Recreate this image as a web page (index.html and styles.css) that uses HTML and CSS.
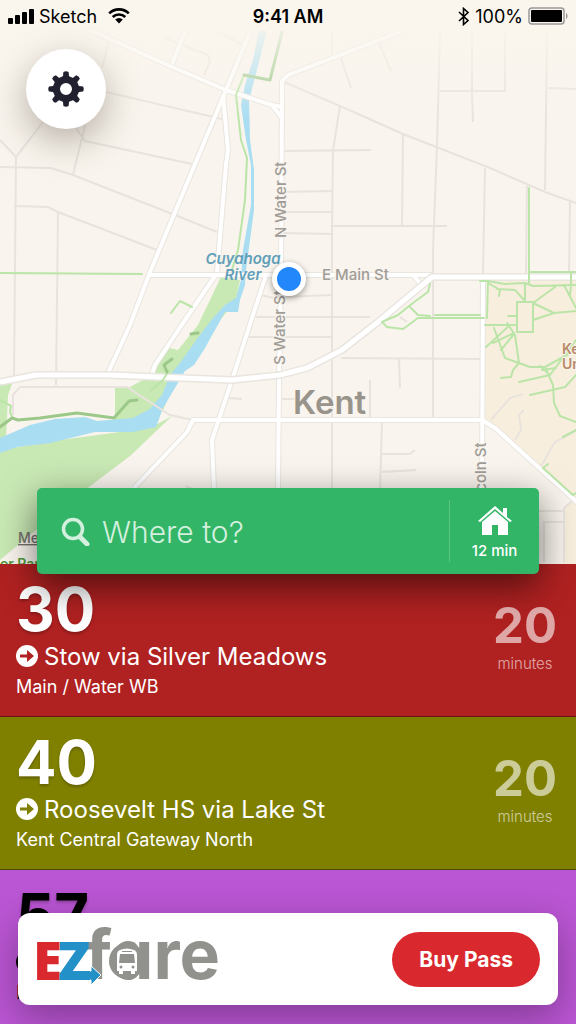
FILE: index.html
```html
<!DOCTYPE html>
<html lang="en">
<head>
    <meta charset="UTF-8">
    <meta name="viewport" content="width=device-width, initial-scale=1.0">
    <title>Nearby Routes</title>
    <link rel="stylesheet" href="styles.css">
</head>
<body>
    <header class="status-bar">
        <div class="status-left">
            <svg width="26" height="16" viewBox="0 0 26 16">
                <rect x="0" y="10" width="5" height="6" rx="1"/>
                <rect x="7" y="7" width="5" height="9" rx="1"/>
                <rect x="14" y="4" width="5" height="12" rx="1"/>
                <rect x="21" y="1" width="5" height="15" rx="1"/>
            </svg>
            <span>Sketch</span>
            <svg class="wifi" width="22" height="16" viewBox="0 0 22 16">
                <path d="M1.2 5.4a14 14 0 0 1 19.6 0M4.7 9a9 9 0 0 1 12.6 0" fill="none" stroke="#000" stroke-width="2.6"/>
                <path d="M7.2 11.6a5.5 5.5 0 0 1 7.6 0L11 15.6z"/>
            </svg>
        </div>
        <div class="status-time">9:41 AM</div>
        <div class="status-right">
            <svg width="12" height="19" viewBox="0 0 12 19">
                <path d="M1 5l9 8.500-4.500 4V1.500L10 5.500 1 14" fill="none" stroke="#000" stroke-width="1.6"/>
            </svg>
            <span>100%</span>
            <svg width="40" height="18" viewBox="0 0 40 18">
                <rect x="1" y="1" width="35" height="16" rx="3" fill="none" stroke="#999" stroke-width="1.500"/>
                <rect x="3" y="3" width="31" height="12" rx="1"/>
                <path d="M38 6c2 1 2 5 0 6z" fill="#999"/>
            </svg>
        </div>
    </header>

    <section class="map">
        <svg class="map-canvas" viewBox="0 0 576 564" preserveAspectRatio="xMidYMid slice">
            <defs>
                <linearGradient id="fade" x1="0" y1="0" x2="0" y2="1">
                    <stop offset="0" stop-color="#faf6ee"/>
                    <stop offset="0.25" stop-color="#faf6ee" stop-opacity="0.85"/>
                    <stop offset="1" stop-color="#faf6ee" stop-opacity="0"/>
                </linearGradient>
            </defs>

            <rect width="576" height="564" fill="#f9f4ed"/>

            <!-- campus -->
            <path d="M487 280H576V500L482 418z" fill="#f8eedd"/>
            <path d="M564 508L576 500V564H564z" fill="#f8eedd"/>

            <!-- parks -->
            <g fill="#c8e8b4">
                <path d="M221 277L240 280 236 300 180 371 163 410 135 425 115 420V387H130L150 376 158 360 170 348 178 350 198 325z"/>
                <path d="M0 384H12L8 395 6 440H0z"/>
                <path d="M0 450L60 440 150 428 172 416 130 456 85 490 36 530 0 560z"/>
            </g>

            <!-- river -->
            <path d="M259 30H267L259 62 249 100 250 140 254 170 254 210 246 270 245 285 240 300 238 312H225L205 348 194 365 185 371 163 408 156 427 133 432H95L50 443 17 447 0 453V438L30 425 55 419 85 417 97 421 133 418 150 409 162 395 170 375 180 363 200 335 213 318 225 305 236 298 241 280 243 250 251 205 251 165 246 140 241 105 245 85 253 60z" fill="#a8ddf2"/>

            <!-- side streets -->
            <g class="street">
                <path d="M109 40L102 68M106 92L222 119M165 38L208 55 210 62 204 75M218 32L242 44"/>
                <path d="M0 140L16 157 43 122M16 157L14 378M0 167L51 168 73 175 175 215 217 232M85 125L73 175M76 128L85 141 192 164"/>
                <path d="M14 206L48 207 58 212 157 250M58 212L56 385M13 415V395L20 387H127L170 415 193 420"/>
                <path d="M332 30V57M341 58L351 88M379 43L391 71M440 30L437 146 433 250V420M472 30V95L473 122M505 30V91H439M547 30L545 190M548 88L576 89"/>
                <path d="M284 82L340 106 403 134 490 168 545 192 576 203M340 106L333 150 332 230V490M403 134L402 226M282 151L371 150"/>
                <path d="M282 192L332 191M282 212H332M282 233L332 234M332 226H447M485 168L483 275M570 202L569 272M527 186L526 275M284 297L332 295"/>
                <path d="M256 317H370M244 337H333M341 358L480 359M399 358L400 388M370 380V418M382 422L380 490M382 454H410L415 450M382 472L416 470M260 295L284 300M229 398L242 399M282 399H298M400 317L407 322M186 486L194 490"/>
                <path d="M491 420L510 398 523 394M515 440L521 430 519 415 524 410M541 466L555 442 576 431M539 511H564M564 562V508L576 498M544 562V522H564"/>
            </g>

            <!-- main roads, casing first and surface on top -->
            <g class="casing">
                <path d="M90 30L170 66 226 90 272 105 282 107M185 32L172 64M250 32L226 90 203 145 150 272 130 325 108 373"/>
                <path d="M223 95L228 150 226 165 217 272M215 276L185 320 155 365 151 377M272 105L282 118M405 30L288 75 282 81 281 280 279 380 278 490"/>
                <path d="M148 275H432M266 275L252 318 232 380 212 440 214 490M134 488L187 432 193 420H482L495 428 578 503M483 277L482 490M414 276L422 286"/>
            </g>
            <g class="surface">
                <path d="M90 30L170 66 226 90 272 105 282 107M185 32L172 64M250 32L226 90 203 145 150 272 130 325 108 373"/>
                <path d="M223 95L228 150 226 165 217 272M215 276L185 320 155 365 151 377M272 105L282 118M405 30L288 75 282 81 281 280 279 380 278 490"/>
                <path d="M148 275H432M266 275L252 318 232 380 212 440 214 490M134 488L187 432 193 420H482L495 428 578 503M483 277L482 490M414 276L422 286"/>
            </g>
            <path class="casing wide" d="M0 382L36 375H110L232 380 280 375 307 368 342 350 378 322 432 277H576"/>
            <path class="surface wide" d="M0 382L36 375H110L232 380 280 375 307 368 342 350 378 322 432 277H576"/>

            <!-- footpaths -->
            <g class="path">
                <path d="M282 32L270 80 244 75 236 95 241 140 247 158 245 200 238 250 232 270M0 273L142 274M171 313L180 301 192 307M169 370L163 380 150 391"/>
                <path d="M0 400L11 406 10 412 13 419M529 188V283M529 272H576"/>
                <path d="M480 281H488L487 318M488 281L505 284 525 283 533 286 576 285M488 283L500 290 499 296M497 289L515 290 524 300M525 284V300M517 302H533V332H517zM508 316H517M533 303L555 287M533 303L554 313 576 311M554 313L533 320M571 272V285L570 295M564 285L576 308"/>
                <path d="M485 325H515M494 328L505 358 519 363 530 367 545 367 576 350M507 323L515 335 519 363 513 370 511 377 501 378M486 347L510 325M493 343L514 333M501 350L514 334M519 382L550 375M530 395L565 387 576 375M545 367L553 385 554 403 560 416 576 422M563 437L576 430M540 366L550 375 576 340M542 370L556 368"/>
                <path d="M430 284L428 292 417 300 409 306 398 315 382 322 387 327 403 329 418 318H484M409 306L418 315 430 316M435 315H480M548 464L543 468 573 495 576 493"/>
            </g>
            <path class="path dark" d="M0 427L12 418 18 420 40 418 77 413 114 418 129 401 137 400M191 334L198 333M172 359L164 365 167 372M270 80L244 75M282 32L270 80"/>

            <g class="label">
                <text class="water" x="243" y="264" text-anchor="middle">Cuyahoga</text>
                <text class="water" x="243" y="280" text-anchor="middle">River</text>
                <text x="322" y="280">E Main St</text>
                <text transform="translate(286 238) rotate(-90)">N Water St</text>
                <text transform="translate(285 365) rotate(-90)">S Water St</text>
                <text transform="translate(486 513) rotate(-90)">Lincoln St</text>
                <text class="campus" x="562" y="354">Kent State</text>
                <text class="campus" x="562" y="369">University</text>
                <text class="city" x="293" y="414">Kent</text>
                <text class="legal" x="18" y="543">Mental</text>
                <text class="park" x="0" y="569">er Park</text>
            </g>

            <rect width="576" height="120" fill="url(#fade)"/>
            <rect width="576" height="31" fill="#faf6ee"/>
        </svg>

        <button class="settings" aria-label="Settings">
            <svg width="36" height="36" viewBox="-18 -18 36 36" fill="#20202e">
                <g id="teeth">
                    <path id="tooth" d="M-5-10L-3-13-2.600-17Q0-18.500 2.600-17L3-13 5-10z"/>
                    <use href="#tooth" transform="rotate(45)"/>
                    <use href="#tooth" transform="rotate(90)"/>
                    <use href="#tooth" transform="rotate(135)"/>
                </g>
                <use href="#teeth" transform="rotate(180)"/>
                <circle r="9.500" fill="none" stroke="#20202e" stroke-width="7"/>
            </svg>
        </button>

        <span class="location"></span>

        <form class="search">
            <svg width="30" height="30" viewBox="0 0 30 30" fill="none" stroke="#d3f0de">
                <circle cx="12" cy="13" r="9.500" stroke-width="3.500"/>
                <path d="M19 21L26 28" stroke-width="5" stroke-linecap="round"/>
            </svg>
            <input type="text" placeholder="Where to?" aria-label="Where to?">
            <button class="home" type="button">
                <svg width="34" height="30" viewBox="0 0 34 30" fill="#fff">
                    <path d="M0 15L17 0 25 7V2H29V11L34 15 32 16 17 3 2 16z"/>
                    <path d="M4 16L17 5 30 16V29H20V19H14V29H4z"/>
                </svg>
                <span>12 min</span>
            </button>
        </form>
    </section>

    <main class="routes">
        <article class="route red">
            <div class="route-info">
                <h2>30</h2>
                <p class="direction">
                    <svg width="22" height="22" viewBox="0 0 22 22">
                        <circle cx="11" cy="11" r="11" fill="#fff"/>
                        <path d="M4 9.500H11V5L18 11 11 17V12.500H4z" fill="#b02121"/>
                    </svg>
                    Stow via Silver Meadows
                </p>
                <p class="stop">Main / Water WB</p>
            </div>
            <div class="eta">
                <strong>20</strong>
                <span>minutes</span>
            </div>
        </article>

        <article class="route olive">
            <div class="route-info">
                <h2>40</h2>
                <p class="direction">
                    <svg width="22" height="22" viewBox="0 0 22 22">
                        <circle cx="11" cy="11" r="11" fill="#fff"/>
                        <path d="M4 9.500H11V5L18 11 11 17V12.500H4z" fill="#808000"/>
                    </svg>
                    Roosevelt HS via Lake St
                </p>
                <p class="stop">Kent Central Gateway North</p>
            </div>
            <div class="eta">
                <strong>20</strong>
                <span>minutes</span>
            </div>
        </article>

        <article class="route purple">
            <div class="route-info">
                <h2>57</h2>
                <p class="direction">
                    <svg width="22" height="22" viewBox="0 0 22 22">
                        <circle cx="11" cy="11" r="11"/>
                        <path d="M4 9.500H11V5L18 11 11 17V12.500H4z" fill="#ba55d3"/>
                    </svg>
                </p>
                <p class="stop">Kent</p>
            </div>
        </article>
    </main>

    <aside class="fare-card">
        <svg class="logo" width="182" height="60" viewBox="0 0 182 60" role="img" aria-label="EZfare">
            <text class="logo-fare" x="49" y="50">fare</text>
            <text class="logo-e" x="-3" y="51">E</text>
            <text class="logo-z" x="22" y="51">Z</text>
            <path d="M40 42H55V37L65 46 55 56V51H40z" fill="#2490c8" stroke="#fff" stroke-width="1"/>
            <rect x="36" y="42" width="18" height="9" fill="#2490c8"/>
            <circle cx="91" cy="32" r="18" fill="#91928d"/>
            <path d="M84 21Q91 18 98 21Q101 22 101 26V42H99V45H95V42H87V45H83V42H81V26Q81 22 84 21z" fill="#fff"/>
            <path d="M84 25H98L99 34H83zM86 22H96V23H86z" fill="#91928d"/>
            <circle cx="85" cy="38" r="1.500" fill="#91928d"/>
            <circle cx="97" cy="38" r="1.500" fill="#91928d"/>
        </svg>
        <button class="buy">Buy Pass</button>
    </aside>
</body>
</html>
```
FILE: styles.css
```css
* {
    box-sizing: border-box;
}

body {
    margin: 0;
    min-height: 100vh;
    background-color: #ba55d3;
    font-family: Inter, sans-serif;
    color: #ffffff;
    overflow-x: hidden;
}

h2,
p {
    margin: 0;
}

button {
    border: none;
    font-family: inherit;
    color: inherit;
    cursor: pointer;
}

/* status bar */

.status-bar {
    position: absolute;
    top: 0;
    left: 0;
    right: 0;
    z-index: 2;
    display: grid;
    grid-template-columns: 1fr auto 1fr;
    align-items: center;
    height: 32px;
    padding: 0 8px;
    color: #000000;
    font-size: 18px;
}

.status-left,
.status-right {
    display: flex;
    align-items: center;
    gap: 5px;
}

.status-left .wifi {
    margin-left: 6px;
}

.status-right {
    justify-content: flex-end;
}

.status-time {
    font-weight: 600;
}

/* map */

.map {
    position: relative;
}

.map-canvas {
    display: block;
    width: 100%;
    aspect-ratio: 576 / 564;
}

.street {
    fill: none;
    stroke: #e8e4dd;
    stroke-width: 2;
}

.casing,
.surface {
    fill: none;
    stroke-linejoin: round;
}

.casing {
    stroke: #e9e5df;
    stroke-width: 6;
}

.surface {
    stroke: #ffffff;
    stroke-width: 4;
}

.casing.wide {
    stroke-width: 8;
}

.surface.wide {
    stroke-width: 5;
}

.path {
    fill: none;
    stroke: #bbe5a8;
    stroke-width: 2;
    stroke-linecap: round;
    stroke-linejoin: round;
}

.path.dark {
    stroke: #9cc88a;
    stroke-width: 3;
}

.label {
    fill: #a09c97;
    font-size: 15px;
    font-weight: 500;
    stroke: #f9f4ed;
    stroke-width: 2px;
    paint-order: stroke;
}

.label .water {
    fill: #619fb9;
    stroke: none;
    font-style: italic;
    font-weight: 600;
}

.label .campus {
    fill: #b88a66;
    font-size: 14px;
    font-weight: 600;
}

.label .city {
    fill: #98948b;
    font-size: 33px;
    font-weight: 600;
}

.label .legal {
    fill: #77736c;
    font-size: 14px;
    stroke: none;
    text-decoration: underline;
}

.label .park {
    fill: #4f9a3c;
    font-size: 14px;
    font-weight: 600;
}

.settings {
    position: absolute;
    top: 49px;
    left: 26px;
    display: flex;
    align-items: center;
    justify-content: center;
    width: 80px;
    height: 80px;
    padding: 0;
    border-radius: 50%;
    background-color: #ffffff;
    box-shadow: 0 12px 36px rgba(80, 70, 60, 0.4);
}

.location {
    position: absolute;
    top: 262px;
    left: 50%;
    width: 34px;
    height: 34px;
    margin-left: -16px;
    border: 5px solid #ffffff;
    border-radius: 50%;
    background-color: #2287fb;
    box-shadow: 0 2px 6px rgba(0, 0, 0, 0.4);
}

.search {
    position: absolute;
    left: 37px;
    right: 37px;
    bottom: -10px;
    display: flex;
    align-items: center;
    height: 86px;
    padding-left: 24px;
    border-radius: 5px;
    background-color: #32b567;
    box-shadow: 0 12px 36px rgba(0, 0, 0, 0.55);
}

.search input {
    flex: 1;
    min-width: 0;
    padding: 2px 11px 0;
    border: none;
    outline: none;
    background: none;
    color: #ffffff;
    font-family: inherit;
    font-size: 30px;
    font-weight: 300;
}

.search input::placeholder {
    color: #d3f0de;
    opacity: 1;
}

.home {
    display: flex;
    flex-direction: column;
    align-items: center;
    gap: 5px;
    width: 90px;
    height: 62px;
    padding: 6px 0 0;
    border-left: 1px solid #5ac485;
    background: none;
    font-size: 15px;
    font-weight: 500;
}

/* routes */

.route {
    display: flex;
    justify-content: space-between;
    min-height: 153px;
    padding: 21px 19px 14px 16px;
    border-bottom: 1px solid rgba(0, 0, 0, 0.4);
}

.red {
    background-color: #b02121;
}

.olive {
    background-color: #808000;
}

.purple {
    background-color: #ba55d3;
    border-bottom: none;
    color: #000000;
}

.route h2 {
    margin-bottom: 7px;
    font-size: 60px;
    line-height: 48px;
    font-weight: 700;
    text-shadow: 0 2px 3px rgba(0, 0, 0, 0.25);
}

.direction {
    display: flex;
    align-items: center;
    gap: 6px;
    height: 32px;
    font-size: 24px;
}

.stop {
    font-size: 18px;
    line-height: 30px;
}

.eta {
    display: flex;
    flex-direction: column;
    align-items: center;
    gap: 8px;
    padding-top: 21px;
    opacity: 0.6;
}

.eta strong {
    font-size: 49px;
    line-height: 40px;
}

.eta span {
    font-size: 15px;
    line-height: 20px;
    font-weight: 300;
}

/* ticket card */

.fare-card {
    position: fixed;
    left: 18px;
    right: 18px;
    bottom: 19px;
    display: flex;
    align-items: center;
    justify-content: space-between;
    height: 92px;
    padding: 0 18px;
    border-radius: 12px;
    background-color: #ffffff;
    box-shadow: 0 12px 36px rgba(0, 0, 0, 0.3);
}

.logo {
    overflow: visible;
}

.logo-fare {
    fill: #91928d;
    font-size: 68px;
    font-weight: 700;
    font-feature-settings: "cv11";
}

.logo-e,
.logo-z {
    font-family: "Open Sans", sans-serif;
    font-size: 53px;
    font-weight: 800;
}

.logo-e {
    fill: #d9292f;
}

.logo-z {
    fill: #2490c8;
}

.buy {
    padding: 0 27px;
    border-radius: 28px;
    background-color: #d9292f;
    font-size: 21px;
    line-height: 55px;
    font-weight: 700;
}
```
